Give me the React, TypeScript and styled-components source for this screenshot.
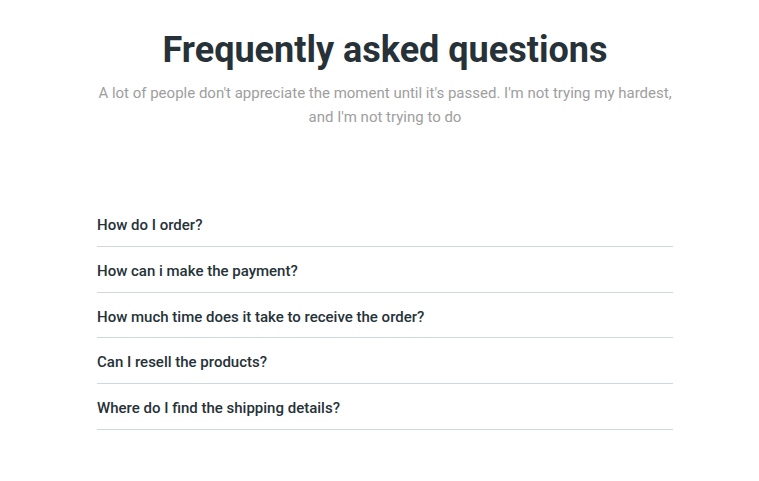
import styled, { createGlobalStyle } from "styled-components";

const GlobalStyle = createGlobalStyle`
  body {
    margin: 0;
    background: #ffffff;
    font-family: Roboto, "Noto Sans", sans-serif;
  }
`;

const Page = styled.section`
  display: flex;
  flex-direction: column;
  align-items: center;
  padding: 28px 0 40px 11px;
`;

const Title = styled.h1`
  margin: 0;
  font-size: 36px;
  line-height: 44px;
  font-weight: 700;
  color: #263238;
  text-align: center;
`;

const Subtitle = styled.p`
  margin: 9px 0 0;
  width: 590px;
  font-size: 15px;
  line-height: 24px;
  font-weight: 400;
  color: #9e9e9e;
  text-align: center;
`;

const List = styled.div`
  width: 576px;
  margin-top: 72px;
  display: flex;
  flex-direction: column;
`;

const Question = styled.div`
  padding: 14px 0 10px;
  font-size: 15px;
  line-height: 20.75px;
  font-weight: 500;
  color: #263238;
  border-bottom: 1px solid #cfd8dc;
  cursor: pointer;
`;

const questions = [
  "How do I order?",
  "How can i make the payment?",
  "How much time does it take to receive the order?",
  "Can I resell the products?",
  "Where do I find the shipping details?",
];

const App = () => {
  return (
    <>
      <GlobalStyle />
      <Page>
        <Title>Frequently asked questions</Title>
        <Subtitle>
          A lot of people don't appreciate the moment until it's passed. I'm
          not trying my hardest, and I'm not trying to do
        </Subtitle>
        <List>
          {questions.map((q) => (
            <Question key={q}>{q}</Question>
          ))}
        </List>
      </Page>
    </>
  );
};

export default App;
